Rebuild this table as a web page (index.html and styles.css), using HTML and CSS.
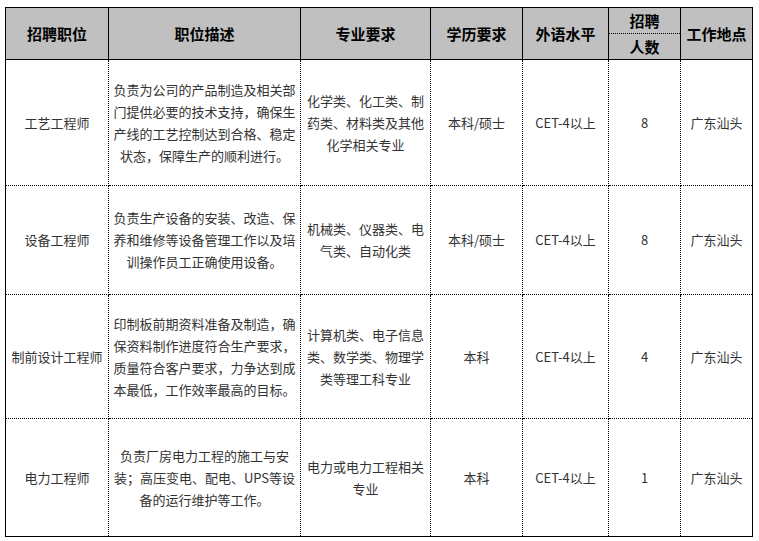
FILE: index.html
```html
<!DOCTYPE html>
<html lang="zh-CN">
<head>
<meta charset="utf-8">
<link rel="stylesheet" href="styles.css">
</head>
<body>
<table class="jobs">
  <colgroup>
    <col class="c1"><col class="c2"><col class="c3"><col class="c4"><col class="c5"><col class="c6"><col class="c7">
  </colgroup>
  <thead>
    <tr class="h1">
      <th rowspan="2">招聘职位</th>
      <th rowspan="2">职位描述</th>
      <th rowspan="2">专业要求</th>
      <th rowspan="2">学历要求</th>
      <th rowspan="2">外语水平</th>
      <th class="split-top">招聘</th>
      <th rowspan="2">工作地点</th>
    </tr>
    <tr class="h2">
      <th class="split-bottom">人数</th>
    </tr>
  </thead>
  <tbody>
    <tr class="r1">
      <td>工艺工程师</td>
      <td>负责为公司的产品制造及相关部门提供必要的技术支持，确保生产线的工艺控制达到合格、稳定状态，保障生产的顺利进行。</td>
      <td>化学类、化工类、制药类、材料类及其他化学相关专业</td>
      <td>本科/硕士</td>
      <td>CET-4以上</td>
      <td>8</td>
      <td>广东汕头</td>
    </tr>
    <tr class="r2">
      <td>设备工程师</td>
      <td>负责生产设备的安装、改造、保养和维修等设备管理工作以及培训操作员工正确使用设备。</td>
      <td>机械类、仪器类、电气类、自动化类</td>
      <td>本科/硕士</td>
      <td>CET-4以上</td>
      <td>8</td>
      <td>广东汕头</td>
    </tr>
    <tr class="r3">
      <td>制前设计工程师</td>
      <td>印制板前期资料准备及制造，确保资料制作进度符合生产要求，质量符合客户要求，力争达到成本最低，工作效率最高的目标。</td>
      <td>计算机类、电子信息类、数学类、物理学类等理工科专业</td>
      <td>本科</td>
      <td>CET-4以上</td>
      <td>4</td>
      <td>广东汕头</td>
    </tr>
    <tr class="r4">
      <td>电力工程师</td>
      <td>负责厂房电力工程的施工与安装；高压变电、配电、UPS等设备的运行维护等工作。</td>
      <td>电力或电力工程相关专业</td>
      <td>本科</td>
      <td>CET-4以上</td>
      <td>1</td>
      <td>广东汕头</td>
    </tr>
  </tbody>
</table>
</body>
</html>
```

FILE: styles.css
```css
html, body {
  margin: 0;
  padding: 0;
  background: #ffffff;
}

body {
  padding: 7px 0 0 5px;
  font-family: "Noto Sans CJK SC", "Noto Sans", "Liberation Sans", sans-serif;
}

.jobs {
  border-collapse: collapse;
  table-layout: fixed;
  width: 748px;
  border: 1px solid #000;
}

.c1 { width: 103px; }
.c2 { width: 192px; }
.c3 { width: 130px; }
.c4 { width: 92px; }
.c5 { width: 86px; }
.c6 { width: 72px; }
.c7 { width: 72px; }

.jobs th {
  background: #c0c0c0;
  color: #000;
  font-size: 15px;
  font-weight: bold;
  line-height: 20px;
  text-align: center;
  vertical-align: middle;
  padding: 0;
  border: 1px solid #000;
}

.jobs .h1 { height: 26px; }
.jobs .h2 { height: 26px; }

.jobs th.split-top { border-bottom: 1px dotted #000; }
.jobs th.split-bottom { border-top: 1px dotted #000; }

.jobs td {
  color: #333;
  font-size: 13px;
  line-height: 22px;
  text-align: center;
  vertical-align: middle;
  padding: 0 4px;
  border: 1px dotted #000;
  word-break: normal;
}

.jobs .r1 { height: 126px; }
.jobs .r2 { height: 109px; }
.jobs .r3 { height: 124px; }
.jobs .r4 { height: 118px; }
```
